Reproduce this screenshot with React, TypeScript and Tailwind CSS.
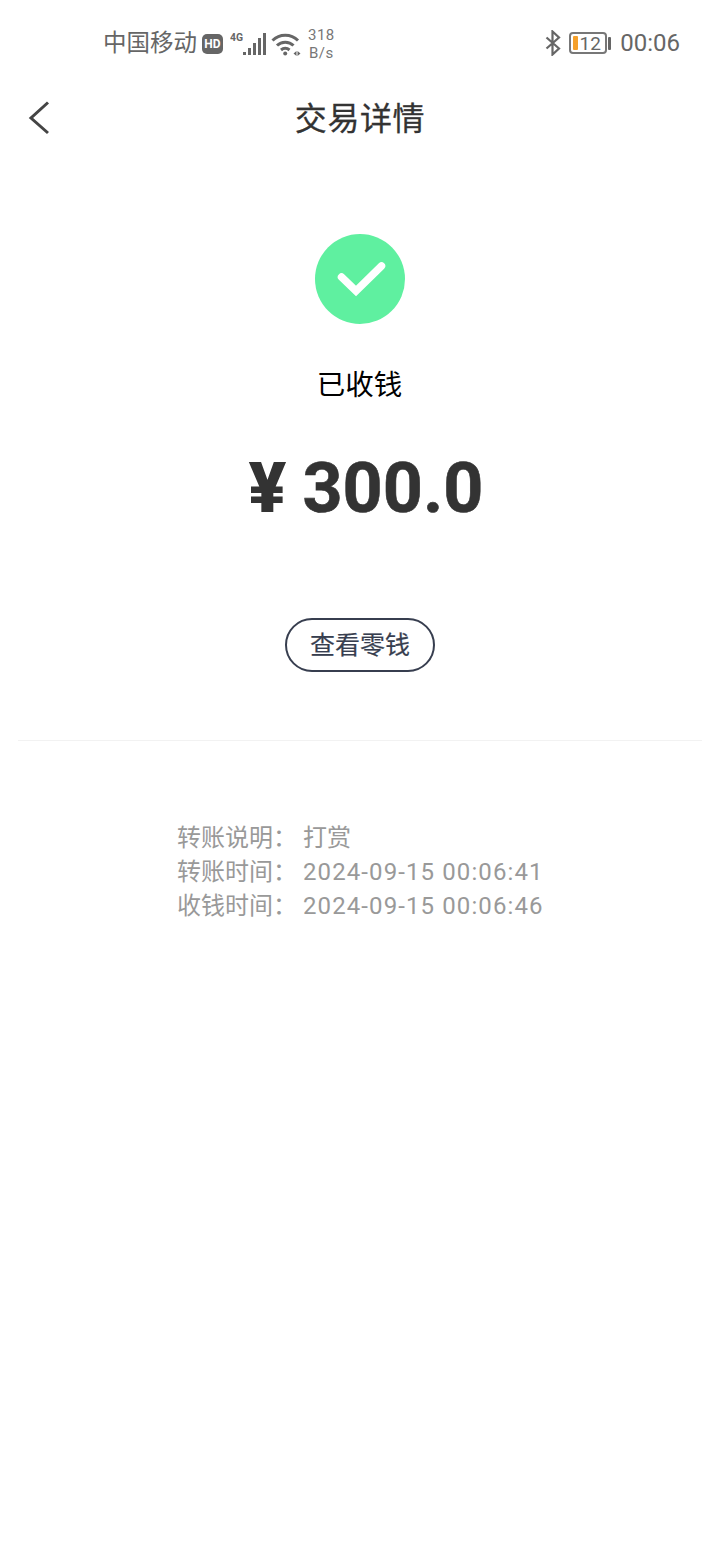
const cjk = "font-['Roboto','Noto_Sans_CJK_SC',sans-serif]";

function Signal() {
  return (
    <svg width="37" height="26" viewBox="0 0 37 26" className="ml-[7px]">
      <text x="0" y="10" fontSize="11" fontWeight="700" fill="#666" fontFamily="Roboto, sans-serif" textLength="13" lengthAdjust="spacingAndGlyphs">4G</text>
      <g fill="#666">
        <rect x="13" y="21" width="3" height="3" />
        <rect x="18" y="17" width="3" height="7" />
        <rect x="23" y="12" width="3" height="12" />
        <rect x="28" y="7" width="3" height="17" />
        <rect x="33" y="2" width="3" height="22" />
      </g>
    </svg>
  );
}

function Wifi() {
  return (
    <svg width="30" height="26" viewBox="0 0 30 26" className="ml-[4px]" fill="none" stroke="#666" strokeWidth="3">
      <path d="M1.5 9.5C8.5 2.5 20 2.5 27 9.5" />
      <path d="M6 14.5C10.5 10 18 10 22.5 14.5" />
      <path d="M10 19C12.5 16.8 16 16.8 18.5 19" />
      <circle cx="14.2" cy="22.5" r="2" fill="#666" stroke="none" />
      <path d="M22.5 22.5l3-2.5v5zM29.5 22.5l-3-2.5v5z" fill="#666" stroke="none" />
    </svg>
  );
}

function StatusBar() {
  return (
    <div className={`flex h-[84px] items-center justify-between pl-[103px] pr-[40px] text-[#666] ${cjk}`}>
      <div className="flex items-center pt-[3px]">
        <span className="text-[23.5px] leading-none">中国移动</span>
        <span className="ml-[5px] flex h-[20px] w-[21px] items-center justify-center rounded-[5px] bg-[#666] text-[12px] font-bold leading-none text-white">
          HD
        </span>
        <Signal />
        <Wifi />
        <span className="ml-[7px] flex flex-col items-center text-[15px] leading-[18px] tracking-[0.5px] text-[#777]">
          <span>318</span>
          <span>B/s</span>
        </span>
      </div>
      <div className="flex items-center pt-[2px]">
        <svg width="18" height="26" viewBox="0 0 18 26" fill="none" stroke="#666" strokeWidth="2.2" strokeLinejoin="miter" className="translate-x-[2px]">
          <path d="M2.5 7.5L15 18.5L8.5 24.5V1.5L15 7.5L2.5 18.5" />
        </svg>
        <div className="ml-[8px] flex items-center translate-x-[1px]">
          <div className="relative flex h-[22px] w-[38px] items-center justify-center rounded-[4px] border-2 border-[#777] text-[19px] leading-none text-[#666]">
            <span className="absolute left-[2px] top-[2px] h-[14px] w-[5px] rounded-[1px] bg-[#f5a02a]" />
            <span className="pl-[4px]">12</span>
          </div>
          <span className="ml-[1px] h-[13px] w-[3px] rounded-[1px] bg-[#666]" />
        </div>
        <span className="ml-[10px] text-[24px] leading-none">00:06</span>
      </div>
    </div>
  );
}

export default function App() {
  return (
    <div className={`min-h-[1560px] w-[720px] bg-white ${cjk}`}>
      <StatusBar />
      <div className="relative flex h-[68px] items-center justify-center">
        <button className="absolute left-[28px] top-[16px]">
          <svg width="22" height="36" viewBox="0 0 22 36" fill="none" stroke="#444" strokeWidth="3" className="block">
            <path d="M20 2.5L3 18L20 33" />
          </svg>
        </button>
        <h1 className="pt-[1px] text-[32px] font-normal leading-none tracking-[0.6px] text-[#333] [-webkit-text-stroke:0.3px_#333]">交易详情</h1>
      </div>

      <div className="mt-[82px] flex flex-col items-center">
        <div className="h-[90px] w-[90px] rounded-full bg-[#5ff0a0]">
          <svg width="90" height="90" viewBox="0 0 90 90" fill="none" stroke="#fff" strokeWidth="7.5" strokeLinecap="round" className="block">
            <path d="M26.5 43L41 57L66.5 32" />
          </svg>
        </div>
        <div className="mt-[44px] pr-[1px] text-[28.5px] leading-[36px] text-black">已收钱</div>
        <div className="mt-[42px] flex items-baseline pl-[12px] text-[70px] font-bold leading-[84px] text-[#333]">
          <span className="font-black">¥</span>
          <span className="ml-[16px] [-webkit-text-stroke:0.6px_#333]">300.0</span>
        </div>
        <button className={`mt-[88px] flex h-[54px] w-[150px] items-center justify-center rounded-full border-2 border-[#373e4f] text-[25px] font-normal leading-none text-[#373e4f] [-webkit-text-stroke:0.2px_#373e4f] ${cjk}`}>
          查看零钱
        </button>
      </div>

      <div className="mx-[18px] mt-[68px] h-[1px] bg-[#f2f2f2]" />

      <div className="ml-[177px] mt-[80px] flex flex-col text-[24px] leading-[34px] text-[#999]">
        <div className="flex"><span className="w-[126px]">转账说明：</span><span>打赏</span></div>
        <div className="flex"><span className="w-[126px]">转账时间：</span><span className="tracking-[1.1px]">2024-09-15 00:06:41</span></div>
        <div className="flex"><span className="w-[126px]">收钱时间：</span><span className="tracking-[1.1px]">2024-09-15 00:06:46</span></div>
      </div>
    </div>
  );
}
